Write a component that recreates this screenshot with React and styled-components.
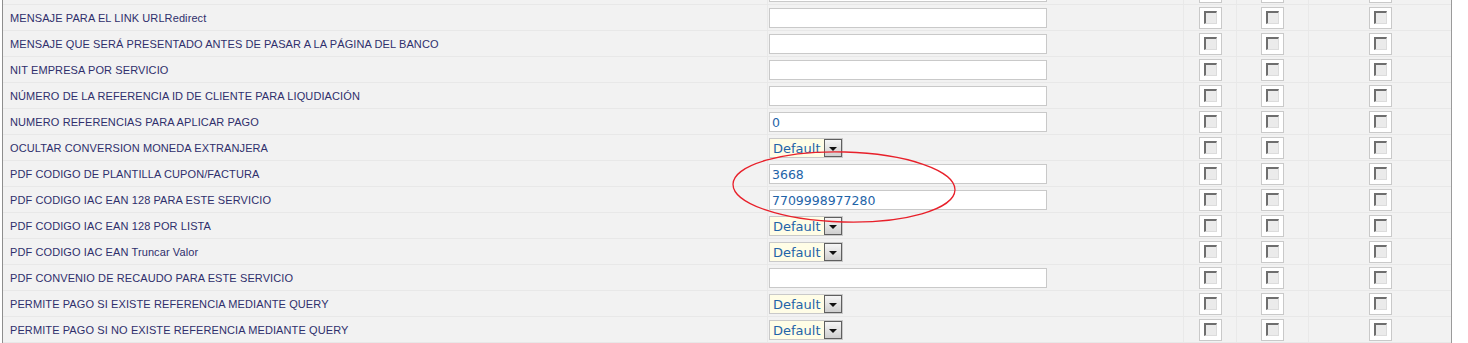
import React from "react";
import styled, { createGlobalStyle } from "styled-components";

const Global = createGlobalStyle`
  html, body { margin: 0; padding: 0; background: #ffffff; overflow: hidden; }
  #root { width: 1468px; height: 343px; }
`;

const Viewport = styled.div`
  position: relative;
  width: 1468px;
  height: 343px;
  overflow: hidden;
  background: #ffffff;
`;

const Panel = styled.div`
  margin-left: 2px;
  width: 1448px;
  border-left: 1px solid #8e8e8e;
  border-right: 1px solid #9a9a9a;
  background: #f2f2f2;
  margin-top: -21px;
  display: flex;
  flex-direction: column;
`;

const Row = styled.div`
  display: grid;
  grid-template-columns: 764px 416px 53px 72px 143px;
  height: 26px;
  border-bottom: 1px solid #e8e8e8;
  box-sizing: border-box;
`;

const Cell = styled.div`
  display: flex;
  align-items: center;
  justify-content: ${(p) => (p.$center ? "center" : "flex-start")};
  border-left: ${(p) => (p.$first ? "none" : "1px solid #e9e9e9")};
  padding-left: ${(p) => p.$pad || 0}px;
  box-sizing: border-box;
  min-width: 0;
`;

const Label = styled.span`
  font-family: "Liberation Sans", Arial, sans-serif;
  font-size: 11px;
  letter-spacing: 0.1px;
  color: #2f2f6c;
  white-space: nowrap;
  padding-top: 1px;
`;

const TextInput = styled.div`
  width: 278px;
  height: 20px;
  box-sizing: border-box;
  border: 1px solid #c9c9c9;
  background: #ffffff;
  font-family: "DejaVu Sans", Verdana, sans-serif;
  font-size: 12.5px;
  color: #1f64a8;
  padding-left: 2px;
  display: flex;
  align-items: center;
  margin-top: 1px;
`;

const Select = styled.div`
  width: 74px;
  height: 20px;
  box-sizing: border-box;
  border: 1px solid #c9c9c9;
  background: #fffde6;
  display: flex;
  align-items: center;
  justify-content: space-between;
  font-family: "DejaVu Sans", Verdana, sans-serif;
  font-size: 13px;
  color: #1f64a8;
  padding-left: 3px;
  margin-top: 1px;
`;

const DropButton = styled.div`
  width: 18px;
  height: 18px;
  box-sizing: border-box;
  border: 1px solid #5f5f5f;
  background: linear-gradient(#f6f6f6, #cfcfcf);
  display: flex;
  align-items: center;
  justify-content: center;
  &::after {
    content: "";
    border-left: 4px solid transparent;
    border-right: 4px solid transparent;
    border-top: 4px solid #111;
    margin-top: 2px;
  }
`;

const CheckFrame = styled.div`
  width: 23px;
  height: 22px;
  box-sizing: border-box;
  border: 1px solid #c9c9c9;
  background: #ffffff;
  display: flex;
  align-items: center;
  justify-content: center;
`;

const CheckBox = styled.div`
  width: 13px;
  height: 13px;
  box-sizing: border-box;
  border-top: 2px solid #6e6e6e;
  border-left: 2px solid #6e6e6e;
  border-right: 1px solid #dcdcdc;
  border-bottom: 1px solid #dcdcdc;
  background: #ebebeb;
`;

const Annotation = styled.svg`
  position: absolute;
  left: 0;
  top: 0;
  pointer-events: none;
`;

const rows = [
  { label: "", kind: "input", value: "" },
  { label: "MENSAJE PARA EL LINK URLRedirect", kind: "input", value: "" },
  { label: "MENSAJE QUE SERÁ PRESENTADO ANTES DE PASAR A LA PÁGINA DEL BANCO", kind: "input", value: "" },
  { label: "NIT EMPRESA POR SERVICIO", kind: "input", value: "" },
  { label: "NÚMERO DE LA REFERENCIA ID DE CLIENTE PARA LIQUDIACIÓN", kind: "input", value: "" },
  { label: "NUMERO REFERENCIAS PARA APLICAR PAGO", kind: "input", value: "0" },
  { label: "OCULTAR CONVERSION MONEDA EXTRANJERA", kind: "select" },
  { label: "PDF CODIGO DE PLANTILLA CUPON/FACTURA", kind: "input", value: "3668" },
  { label: "PDF CODIGO IAC EAN 128 PARA ESTE SERVICIO", kind: "input", value: "7709998977280" },
  { label: "PDF CODIGO IAC EAN 128 POR LISTA", kind: "select" },
  { label: "PDF CODIGO IAC EAN Truncar Valor", kind: "select" },
  { label: "PDF CONVENIO DE RECAUDO PARA ESTE SERVICIO", kind: "input", value: "" },
  { label: "PERMITE PAGO SI EXISTE REFERENCIA MEDIANTE QUERY", kind: "select" },
  { label: "PERMITE PAGO SI NO EXISTE REFERENCIA MEDIANTE QUERY", kind: "select" },
];

const Check = () => (
  <CheckFrame>
    <CheckBox />
  </CheckFrame>
);

export default function App() {
  return (
    <Viewport>
      <Global />
      <Panel>
        {rows.map((r, i) => (
          <Row key={i}>
            <Cell $first $pad={7}>
              <Label>{r.label}</Label>
            </Cell>
            <Cell $pad={1}>
              {r.kind === "input" ? (
                <TextInput>{r.value}</TextInput>
              ) : (
                <Select>
                  <span>Default</span>
                  <DropButton />
                </Select>
              )}
            </Cell>
            <Cell $center>
              <Check />
            </Cell>
            <Cell $center>
              <Check />
            </Cell>
            <Cell $center>
              <Check />
            </Cell>
          </Row>
        ))}
      </Panel>
      <Annotation width="1468" height="343">
        <ellipse
          cx="844"
          cy="187"
          rx="111"
          ry="35"
          fill="none"
          stroke="#e8202a"
          strokeWidth="1.3"
          transform="rotate(1.5 844 187)"
        />
      </Annotation>
    </Viewport>
  );
}
